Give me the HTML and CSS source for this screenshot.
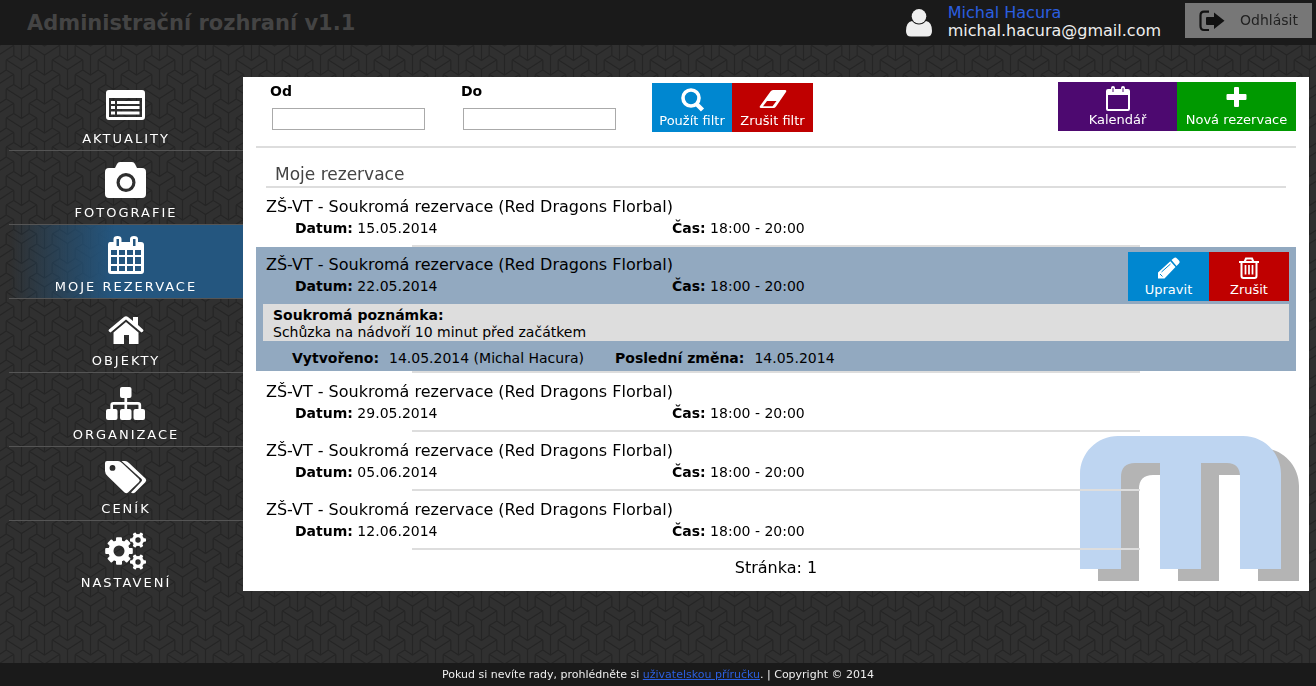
FILE: index.html
```html
<!DOCTYPE html>
<html lang="cs">
<head>
<meta charset="utf-8">
<title>Administrační rozhraní v1.1</title>
<link rel="stylesheet" href="styles.css">
</head>
<body>
<svg class="backdrop" aria-hidden="true">
  <defs>
    <path id="tripod" fill="none" stroke="#252525" stroke-width="1.2" d="M-15.3-9.7 0 0 15.3-9.7M0 0V20M-7.7 15 0 20 7.7 15M-7.7 5V15M7.7 5V15M-7.7 5-15.3.5M7.7 5 15.3.5"/>
    <pattern id="weave" width="46" height="29" x="-1" patternUnits="userSpaceOnUse">
      <use href="#tripod" x="-.5" y="-3"/><use href="#tripod" x="-.5" y="26"/>
      <use href="#tripod" x="45.5" y="-3"/><use href="#tripod" x="45.5" y="26"/>
      <use href="#tripod" x="22.5" y="-17.5"/><use href="#tripod" x="22.5" y="11.5"/><use href="#tripod" x="22.5" y="40.5"/>
    </pattern>
  </defs>
  <rect width="100%" height="100%" fill="url(#weave)"/>
</svg>

<header class="topbar">
  <h1 class="brand">Administrační rozhraní v1.1</h1>
  <div class="account">
    <svg class="account-icon" width="26" height="28" viewBox="0 0 26 28" fill="#eee"><ellipse cx="13" cy="7.300" rx="7.300" ry="7.300"/><path d="M6 12Q0 13 0 22Q0 27.500 5 27.500H21Q26 27.500 26 22Q26 13 20 12Q17 15.500 13 15.500T6 12Z"/></svg>
    <div class="account-text">
      <a class="account-name" href="#">Michal Hacura</a>
      <span class="account-mail">michal.hacura@gmail.com</span>
    </div>
    <button class="logout" type="button">
      <svg width="26" height="22" viewBox="0 0 26 22"><path d="M10 1.700H5Q1.500 1.700 1.500 5.500V16Q1.500 20 5 20H10" fill="none" stroke="#111" stroke-width="2.200"/><path d="M15 2.500 25.500 10.800 15 19V15H8Q7 15 7 14V8Q7 7 8 7H15Z" fill="#111"/></svg>
      <span>Odhlásit</span>
    </button>
  </div>
</header>

<div class="layout">
  <nav class="sidebar">
    <a class="nav-item" href="#">
      <svg width="42" height="40" viewBox="0 0 42 40"><path fill="#fff" fill-rule="evenodd" d="M4 4H37Q40 4 40 7V31Q40 34 37 34H4Q1 34 1 31V7Q1 4 4 4ZM4 12V31H37V12Z"/><path fill="#fff" d="M6 15h4v3H6zM12 15h22.500v3H12zM6 20h4v3H6zM12 20h22.500v3H12zM6 25.500h4v3H6zM12 25.500h22.500v3H12z"/></svg>
      <span>AKTUALITY</span></a>
    <a class="nav-item" href="#">
      <svg width="42" height="40" viewBox="0 0 42 40"><path fill="#fff" fill-rule="evenodd" d="M5 8H10L12 4Q13 2 15 2H27Q29 2 30 4L32 8H37Q41 8 41 12V34Q41 38 37 38H4Q0 38 0 34V12Q0 8 4 8ZM21 13A9.500 9.500 0 1 0 21 32A9.500 9.500 0 1 0 21 13Z"/><circle cx="21" cy="22.500" r="6.300" fill="#fff"/></svg>
      <span>FOTOGRAFIE</span></a>
    <a class="nav-item active" href="#">
      <svg width="42" height="40" viewBox="0 0 42 40"><path fill="#fff" fill-rule="evenodd" d="M5 8H8.500V5Q8.500 2 12.500 2T16.500 5V8H25V5Q25 2 29 2T33 5V8H36Q39 8 39 11V37Q39 40 36 40H6Q3 40 3 37V11Q3 8 5 8ZM11.500 5V12H14V5ZM28 5V12H30.500V5ZM6 16V21H12V16ZM14 16V21H20V16ZM22 16V21H28V16ZM30 16V21H36V16ZM6 23V30H12V23ZM14 23V30H20V23ZM22 23V30H28V23ZM30 23V30H36V23ZM6 32V37H12V32ZM14 32V37H20V32ZM22 32V37H28V32ZM30 32V37H36V32Z"/></svg>
      <span>MOJE REZERVACE</span></a>
    <a class="nav-item" href="#">
      <svg width="42" height="40" viewBox="0 -4 42 40"><path fill="#fff" d="M4 19.500Q3 18.500 4 17.500L19 5Q21 3.500 23 5L28 9V5H33V13L38 17.500Q39 18.500 38 19.500L36.500 20.500 21 7.500 5.500 20.500Z"/><path fill="#fff" d="M8.500 20.500 21 10 33.500 20.500V32H24V23H19V32H8.500Z"/></svg>
      <span>OBJEKTY</span></a>
    <a class="nav-item" href="#">
      <svg width="42" height="40" viewBox="0 -3 42 40"><g fill="#fff"><rect x="15" y="2" width="11.500" height="11" rx="2"/><rect x="1" y="24" width="11.500" height="11" rx="2"/><rect x="15" y="24" width="11.500" height="11" rx="2"/><rect x="28.500" y="24" width="11.500" height="11" rx="2"/></g><path fill="none" stroke="#fff" stroke-width="2.700" d="M20.800 12V25M6.700 25V20Q6.700 18.300 8.500 18.300H33Q34.800 18.300 34.800 20V25"/></svg>
      <span>ORGANIZACE</span></a>
    <a class="nav-item" href="#">
      <svg width="42" height="40" viewBox="0 -3 42 40"><path fill="#fff" fill-rule="evenodd" d="M2 2H13Q15 2 17 4L34 20Q35.500 21.500 34 23L23 33.500Q21.500 35 19.500 33.500L3 17.500Q0 15 0 12V4Q0 2 2 2ZM7.500 6A2.900 2.900 0 1 0 7.500 11.800A2.900 2.900 0 1 0 7.500 6Z"/><path fill="#fff" d="M16.500 2H20Q22 2 24 4L40.500 19.500Q42 21.200 40.500 23L30 33.500Q28 35 26 33.500L36 23Q38 21.200 36 19.500Z"/></svg>
      <span>CENÍK</span></a>
    <a class="nav-item" href="#">
      <svg width="42" height="40" viewBox="0 0 42 40">
        <defs>
          <g id="teeth8" fill="#fff"><rect x="-3" y="-13.800" width="6" height="27.600" rx="1"/><rect x="-3" y="-13.800" width="6" height="27.600" rx="1" transform="rotate(45)"/><rect x="-3" y="-13.800" width="6" height="27.600" rx="1" transform="rotate(90)"/><rect x="-3" y="-13.800" width="6" height="27.600" rx="1" transform="rotate(135)"/><circle r="10.700"/></g>
          <g id="teeth6" fill="#fff"><rect x="-1.700" y="-8" width="3.400" height="16" rx="1" transform="rotate(30)"/><rect x="-1.700" y="-8" width="3.400" height="16" rx="1" transform="rotate(90)"/><rect x="-1.700" y="-8" width="3.400" height="16" rx="1" transform="rotate(150)"/><circle r="6"/></g>
          <mask id="holes"><rect width="42" height="40" fill="#fff"/><circle cx="14" cy="21" r="5.500"/><circle cx="33" cy="10" r="2.700"/><circle cx="33" cy="32" r="2.700"/></mask>
        </defs>
        <g mask="url(#holes)"><use href="#teeth8" x="14" y="21"/><use href="#teeth6" x="33" y="10"/><use href="#teeth6" x="33" y="32"/></g></svg>
      <span>NASTAVENÍ</span></a>
  </nav>

  <main class="panel">
    <svg class="watermark" width="219" height="145" viewBox="0 0 219 145" aria-hidden="true">
      <defs><path id="emblem" d="M0 133V38C0 17 17 0 38 0H163C184 0 201 17 201 38V133H160V41Q160 27 147 27H121V133H80V27H55Q41 27 41 41V133Z"/></defs>
      <use href="#emblem" x="18" y="12" fill="#b4b4b4"/><path d="M139 39H160V133H139Z" fill="#fff"/><use href="#emblem" fill="#bed5f1"/>
    </svg>

    <form class="filter">
      <div class="field"><label for="from">Od</label><input id="from" type="text"></div>
      <div class="field"><label for="to">Do</label><input id="to" type="text"></div>
      <div class="buttons filter-actions">
        <button class="tile blue" type="button"><svg width="28" height="26" viewBox="0 0 28 26"><circle cx="13" cy="11" r="8" fill="none" stroke="#fff" stroke-width="3.600"/><path d="M18.500 17 24.500 23" stroke="#fff" stroke-width="4.400"/></svg><span>Použít filtr</span></button>
        <button class="tile red" type="button"><svg width="28" height="26" viewBox="0 0 28 26"><path fill="#fff" fill-rule="evenodd" d="M14 3H26Q28 3 27 5L17 19.500Q16 21 14.500 21H2Q0 21 1 19L11.500 4.500Q12.500 3 14 3ZM8 14 4 19.300H13.500L17.500 14Z"/></svg><span>Zrušit filtr</span></button>
      </div>
      <div class="buttons wide">
        <button class="tile purple" type="button"><svg width="28" height="26" viewBox="0 0 28 26"><path fill="#fff" fill-rule="evenodd" d="M4 3H7V2Q7 0 9 0T11 2V3H17V2Q17 0 19 0T21 2V3H24Q26 3 26 5V23Q26 25 24 25H4Q2 25 2 23V5Q2 3 4 3ZM4 9V23H24V9ZM8.500 2V6H9.500V2ZM18.500 2V6H19.500V2Z"/></svg><span>Kalendář</span></button>
        <button class="tile green" type="button"><svg width="28" height="26" viewBox="0 0 28 26"><path fill="#fff" d="M12 1H15Q16 1 16 2V8H22.500Q23.500 8 23.500 9V13Q23.500 14 22.500 14H16V20Q16 21 15 21H12Q11 21 11 20V14H4.500Q3.500 14 3.500 13V9Q3.500 8 4.500 8H11V2Q11 1 12 1Z"/></svg><span>Nová rezervace</span></button>
      </div>
    </form>

    <h2 class="heading">Moje rezervace</h2>

    <article class="booking">
      <h3>ZŠ-VT - Soukromá rezervace (Red Dragons Florbal)</h3>
      <div class="when"><span><b>Datum:</b> 15.05.2014</span><span><b>Čas:</b> 18:00 - 20:00</span></div>
    </article>
    <article class="booking selected">
      <h3>ZŠ-VT - Soukromá rezervace (Red Dragons Florbal)</h3>
      <div class="when"><span><b>Datum:</b> 22.05.2014</span><span><b>Čas:</b> 18:00 - 20:00</span></div>
      <div class="note"><b>Soukromá poznámka:</b><span>Schůzka na nádvoří 10 minut před začátkem</span></div>
      <div class="history"><b>Vytvořeno:</b><span>14.05.2014 (Michal Hacura)</span><b class="changed">Poslední změna:</b><span>14.05.2014</span></div>
      <div class="buttons row-actions">
        <button class="tile blue" type="button"><svg width="28" height="26" viewBox="0 0 28 26"><path fill="#fff" d="M16.500 4 19 2Q20.500 .8 22 2.500L24 4.500Q25.500 6 24 7.500L21.500 10ZM15.300 5.200 20.500 11 9.500 22.500H3V16.500Z"/><path d="M6.500 16 15.500 8M5 18 7.500 20.500" stroke="#0087d0" fill="none"/></svg><span>Upravit</span></button>
        <button class="tile red" type="button"><svg width="28" height="26" viewBox="0 0 28 26"><path fill="none" stroke="#fff" stroke-width="2" d="M4 6H24M9.500 6 11 2.500H17L18.500 6M6.500 6V20Q6.500 22 8.500 22H19.500Q21.500 22 21.500 20V6"/><path stroke="#fff" stroke-width="1.700" d="M10.500 9V18.500M14 9V18.500M17.500 9V18.500"/></svg><span>Zrušit</span></button>
      </div>
    </article>
    <article class="booking">
      <h3>ZŠ-VT - Soukromá rezervace (Red Dragons Florbal)</h3>
      <div class="when"><span><b>Datum:</b> 29.05.2014</span><span><b>Čas:</b> 18:00 - 20:00</span></div>
    </article>
    <article class="booking">
      <h3>ZŠ-VT - Soukromá rezervace (Red Dragons Florbal)</h3>
      <div class="when"><span><b>Datum:</b> 05.06.2014</span><span><b>Čas:</b> 18:00 - 20:00</span></div>
    </article>
    <article class="booking">
      <h3>ZŠ-VT - Soukromá rezervace (Red Dragons Florbal)</h3>
      <div class="when"><span><b>Datum:</b> 12.06.2014</span><span><b>Čas:</b> 18:00 - 20:00</span></div>
    </article>
    <p class="pager">Stránka: 1</p>
  </main>
</div>

<footer class="footer">Pokud si nevíte rady, prohlédněte si <a href="#">uživatelskou příručku</a>. | Copyright © 2014</footer>
</body>
</html>
```

FILE: styles.css
```css
* { box-sizing: border-box; }

body {
  margin: 0;
  min-height: 100vh;
  display: flex;
  flex-direction: column;
  background: #303030;
  color: #000;
  font-family: Verdana, "DejaVu Sans", sans-serif;
  font-size: 14px;
  line-height: 17px;
}

h1, h2, h3, p { margin: 0; font-weight: normal; }
button, input { font: inherit; }
button { border: 0; cursor: pointer; }
svg { display: block; flex: none; }

.backdrop {
  position: fixed;
  inset: 0;
  width: 100%;
  height: 100%;
  z-index: -1;
}

.topbar {
  display: flex;
  align-items: center;
  justify-content: space-between;
  height: 45px;
  padding: 0 4px 0 27px;
  background: #1a1a1a;
}
.brand { color: #444; font-size: 21px; font-weight: bold; line-height: 28px; }
.account { display: flex; align-items: center; gap: 16px; height: 100%; }
.account-text { display: flex; flex-direction: column; font-size: 16px; line-height: 18px; padding-bottom: 2px; }
.account-name { color: #2b5fe0; text-decoration: none; }
.account-mail { color: #eee; }
.logout {
  display: flex;
  align-items: center;
  justify-content: space-between;
  width: 127px;
  height: 35px;
  margin: 0 0 4px 8px;
  padding: 0 14px;
  background: #777;
  color: #222;
}

.layout {
  flex: 1;
  display: flex;
  align-items: flex-start;
  padding: 32px 7px 32px 9px;
}

.sidebar { flex: none; width: 234px; }
.nav-item {
  display: flex;
  flex-direction: column;
  align-items: center;
  gap: 5px;
  height: 74px;
  padding-top: 9px;
  border-bottom: 1px solid #555;
  color: #fff;
  font-size: 13px;
  letter-spacing: 2px;
  line-height: 16px;
  text-decoration: none;
}
.nav-item:last-child { border-bottom: 0; }
.nav-item.active { background: linear-gradient(to right, rgba(36, 86, 127, 0), #24567f 45%); }

.panel {
  flex: 1;
  position: relative;
  z-index: 0;
  padding: 0 13px 13px;
  background: #fff;
}
.watermark { position: absolute; right: 10px; bottom: 10px; z-index: -1; }

.filter {
  display: flex;
  align-items: flex-start;
  height: 71px;
  padding: 5px 0 0 14px;
  border-bottom: 2px solid #ddd;
}
.field { display: flex; flex-direction: column; gap: 8px; width: 191px; padding-top: 1px; }
.field label { font-weight: bold; }
.field input {
  width: 153px;
  height: 22px;
  margin-left: 2px;
  border: 1px solid #aaa;
  background: #fff;
}

.buttons { display: flex; }
.buttons.wide { margin-left: auto; }
.filter-actions { padding-top: 1px; }
.tile {
  display: flex;
  flex-direction: column;
  align-items: center;
  width: 81px;
  height: 49px;
  padding: 4px 0 0;
  color: #fff;
  font-size: 13px;
  line-height: 16px;
  white-space: nowrap;
}
.wide .tile { width: 119px; }
.filter-actions .blue, .row-actions .red { width: 80px; }
.blue { background: #0087d0; }
.red { background: #bf0000; }
.purple { background: #4d0970; }
.green { background: #090; }

.heading {
  margin: 0 10px;
  padding: 17px 9px 2px;
  border-bottom: 2px solid #ddd;
  color: #444;
  font-size: 17px;
  line-height: 19px;
}

.booking { position: relative; height: 59px; padding: 9px 10px 0; }
.booking::after {
  content: "";
  position: absolute;
  left: 15%;
  right: 15%;
  bottom: 0;
  height: 2px;
  background: #ddd;
}
.booking h3 { font-size: 16px; line-height: 20px; }
.when {
  display: grid;
  grid-template-columns: 377px 1fr;
  padding: 3px 0 0 29px;
}
.selected {
  height: auto;
  margin-bottom: 2px;
  padding-top: 8px;
  padding-bottom: 4px;
  background: #92a9c0;
}
.selected::after { bottom: -2px; }
.note {
  display: flex;
  flex-direction: column;
  margin: 9px -3px 0;
  padding: 3px 10px 0;
  background: #ddd;
}
.history { display: flex; gap: 10px; padding: 9px 26px 0; }
.changed { margin-left: 21px; }
.row-actions { position: absolute; top: 5px; right: 7px; }

.pager { padding-top: 8px; text-align: center; font-size: 16px; line-height: 20px; }

.footer {
  padding: 4px 0;
  background: #1a1a1a;
  color: #eee;
  font-size: 11px;
  line-height: 15px;
  text-align: center;
}
.footer a { color: #2b5fe0; }
```
